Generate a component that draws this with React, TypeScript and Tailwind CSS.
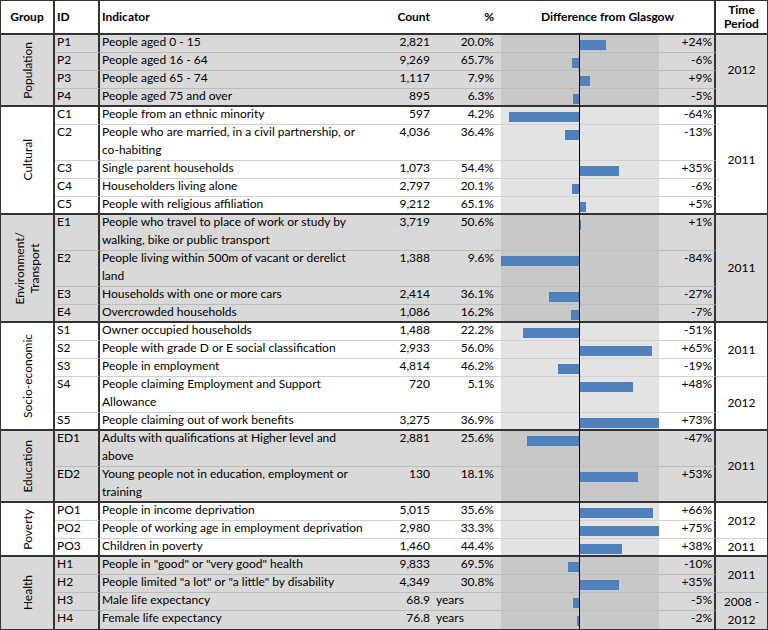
type Period = { label: string[]; at: number; span: number };
type Item = { id: string; text: string[]; count: string; pct: string; diff: number; unit?: boolean };
type Group = { name: string[]; shade: boolean; items: Item[]; periods: Period[] };

const groups: Group[] = [
  {
    name: ['Population'],
    shade: true,
    items: [
      { id: 'P1', text: ['People aged 0 - 15'], count: '2,821', pct: '20.0%', diff: 24 },
      { id: 'P2', text: ['People aged 16 - 64'], count: '9,269', pct: '65.7%', diff: -6 },
      { id: 'P3', text: ['People aged 65 - 74'], count: '1,117', pct: '7.9%', diff: 9 },
      { id: 'P4', text: ['People aged 75 and over'], count: '895', pct: '6.3%', diff: -5 },
    ],
    periods: [{ label: ['2012'], at: 0, span: 4 }],
  },
  {
    name: ['Cultural'],
    shade: false,
    items: [
      { id: 'C1', text: ['People from an ethnic minority'], count: '597', pct: '4.2%', diff: -64 },
      {
        id: 'C2',
        text: ['People who are married, in a civil partnership, or', 'co-habiting'],
        count: '4,036',
        pct: '36.4%',
        diff: -13,
      },
      { id: 'C3', text: ['Single parent households'], count: '1,073', pct: '54.4%', diff: 35 },
      { id: 'C4', text: ['Householders living alone'], count: '2,797', pct: '20.1%', diff: -6 },
      { id: 'C5', text: ['People with religious affiliation'], count: '9,212', pct: '65.1%', diff: 5 },
    ],
    periods: [{ label: ['2011'], at: 0, span: 6 }],
  },
  {
    name: ['Environment/', 'Transport'],
    shade: true,
    items: [
      {
        id: 'E1',
        text: ['People who travel to place of work or study by', 'walking, bike or public transport'],
        count: '3,719',
        pct: '50.6%',
        diff: 1,
      },
      {
        id: 'E2',
        text: ['People living within 500m of vacant or derelict', 'land'],
        count: '1,388',
        pct: '9.6%',
        diff: -84,
      },
      { id: 'E3', text: ['Households with one or more cars'], count: '2,414', pct: '36.1%', diff: -27 },
      { id: 'E4', text: ['Overcrowded households'], count: '1,086', pct: '16.2%', diff: -7 },
    ],
    periods: [{ label: ['2011'], at: 0, span: 6 }],
  },
  {
    name: ['Socio-economic'],
    shade: false,
    items: [
      { id: 'S1', text: ['Owner occupied households'], count: '1,488', pct: '22.2%', diff: -51 },
      { id: 'S2', text: ['People with grade D or E social classification'], count: '2,933', pct: '56.0%', diff: 65 },
      { id: 'S3', text: ['People in employment'], count: '4,814', pct: '46.2%', diff: -19 },
      {
        id: 'S4',
        text: ['People claiming Employment and Support', 'Allowance'],
        count: '720',
        pct: '5.1%',
        diff: 48,
      },
      { id: 'S5', text: ['People claiming out of work benefits'], count: '3,275', pct: '36.9%', diff: 73 },
    ],
    periods: [
      { label: ['2011'], at: 0, span: 3 },
      { label: ['2012'], at: 3, span: 3 },
    ],
  },
  {
    name: ['Education'],
    shade: true,
    items: [
      {
        id: 'ED1',
        text: ['Adults with qualifications at Higher level and', 'above'],
        count: '2,881',
        pct: '25.6%',
        diff: -47,
      },
      {
        id: 'ED2',
        text: ['Young people not in education, employment or', 'training'],
        count: '130',
        pct: '18.1%',
        diff: 53,
      },
    ],
    periods: [{ label: ['2011'], at: 0, span: 4 }],
  },
  {
    name: ['Poverty'],
    shade: false,
    items: [
      { id: 'PO1', text: ['People in income deprivation'], count: '5,015', pct: '35.6%', diff: 66 },
      { id: 'PO2', text: ['People of working age in employment deprivation'], count: '2,980', pct: '33.3%', diff: 75 },
      { id: 'PO3', text: ['Children in poverty'], count: '1,460', pct: '44.4%', diff: 38 },
    ],
    periods: [
      { label: ['2012'], at: 0, span: 2 },
      { label: ['2011'], at: 2, span: 1 },
    ],
  },
  {
    name: ['Health'],
    shade: true,
    items: [
      { id: 'H1', text: ['People in "good" or "very good" health'], count: '9,833', pct: '69.5%', diff: -10 },
      { id: 'H2', text: ['People limited "a lot" or "a little" by disability'], count: '4,349', pct: '30.8%', diff: 35 },
      { id: 'H3', text: ['Male life expectancy'], count: '68.9', pct: 'years', diff: -5, unit: true },
      { id: 'H4', text: ['Female life expectancy'], count: '76.8', pct: 'years', diff: -2, unit: true },
    ],
    periods: [
      { label: ['2011'], at: 0, span: 2 },
      { label: ['2008 -', '2012'], at: 2, span: 2 },
    ],
  },
];

const SPAN: Record<number, string> = {
  1: 'row-span-1',
  2: 'row-span-2',
  3: 'row-span-3',
  4: 'row-span-4',
  6: 'row-span-6',
};

const DARK = 'border-b-2 border-b-[#333]';

function Bar({ diff }: { diff: number }) {
  // 1.1px per percentage point, clipped to the band
  const w = Math.min(Math.round(Math.abs(diff) * 1.1), diff < 0 ? 78 : 79);
  const left = diff < 0 ? 78 - w : 79;
  return <div className="absolute top-[5px] h-[10px] bg-[#4f81bd]" style={{ left, width: w }} />;
}

function GroupRows({ g, last }: { g: Group; last: boolean }) {
  const rowBg = g.shade ? 'bg-[#d9d9d9]' : 'bg-white';
  const band = g.shade ? 'bg-[#c8c8c8]' : 'bg-[#e3e3e3]';
  const light = g.shade ? 'border-b border-b-[#bcbcbc]' : 'border-b border-b-[#d0d0d0]';
  const total = g.items.reduce((n, it) => n + it.text.length, 0);
  const groupEnd = last ? '' : DARK;

  return (
    <>
      <div className={`${SPAN[total]} ${rowBg} ${groupEnd} border-r-2 border-r-[#333] flex items-center justify-center`}>
        <div className="[writing-mode:vertical-rl] rotate-180 text-center leading-[15px]">
          {g.name.map((n) => (
            <div key={n}>{n}</div>
          ))}
        </div>
      </div>
      {g.items.map((it, i) => {
        const span = SPAN[it.text.length];
        const isEnd = i === g.items.length - 1;
        const bb = isEnd ? groupEnd : light;
        const period = g.periods.find((p) => p.at === i);
        let periodEnd = '';
        if (period) {
          const endIdx = g.items.findIndex(
            (_, k) => k >= i && g.items.slice(i, k + 1).reduce((n, x) => n + x.text.length, 0) >= period.span,
          );
          periodEnd = endIdx === g.items.length - 1 ? groupEnd : light;
        }
        return (
          <div key={it.id} className="contents">
            <div className={`${span} ${rowBg} ${bb} border-r-2 border-r-[#333] pl-[2px]`}>
              <div className="-mt-[2px]">{it.id}</div>
            </div>
            <div className={`${span} ${rowBg} ${bb} relative z-[1] pl-[2px] whitespace-nowrap`}>
              <div className="-mt-[2px]">
                {it.text.map((t) => (
                  <div key={t}>{t}</div>
                ))}
              </div>
            </div>
            <div className={`${span} ${rowBg} ${bb} pr-[3px] text-right`}>
              <div className="-mt-[2px]">{it.count}</div>
            </div>
            <div className={`${span} ${rowBg} ${bb} ${it.unit ? 'pl-[3px] text-left' : 'pr-[7px] text-right'}`}>
              <div className="-mt-[2px]">{it.pct}</div>
            </div>
            <div className={`${span} ${band} ${bb} relative`}>
              <Bar diff={it.diff} />
              <div className="absolute left-[78px] top-0 bottom-[-2px] w-px bg-black" />
            </div>
            <div className={`${span} ${rowBg} ${bb} border-r-2 border-r-[#333] pr-[2px] text-right`}>
              <div className="-mt-[2px]">
                {it.diff > 0 ? '+' : ''}
                {it.diff}%
              </div>
            </div>
            {period && (
              <div className={`${SPAN[period.span]} ${rowBg} ${periodEnd} flex flex-col items-center justify-center leading-[18px]`}>
                {period.label.map((l) => (
                  <div key={l}>{l}</div>
                ))}
              </div>
            )}
          </div>
        );
      })}
    </>
  );
}

export default function App() {
  return (
    <div className="w-[768px] h-[630px] bg-white font-[Lato,sans-serif] text-[12px] leading-[18px] text-black">
      <div className="grid grid-cols-[54px_45px_260px_73px_68px_158px_57px_51px] grid-rows-[34px_repeat(33,18px)] border border-[#333]">
        {/* header */}
        <div className={`${DARK} border-r-2 border-r-[#333] flex items-center justify-center font-bold`}>Group</div>
        <div className={`${DARK} border-r-2 border-r-[#333] flex items-center pl-[2px] font-bold`}>ID</div>
        <div className={`${DARK} flex items-center pl-[2px] font-bold`}>Indicator</div>
        <div className={`${DARK} flex items-center justify-end pr-[3px] font-bold`}>Count</div>
        <div className={`${DARK} flex items-center justify-end pr-[7px] font-bold`}>%</div>
        <div className={`${DARK} col-span-2 border-r-2 border-r-[#333] flex items-center justify-center font-bold`}>
          Difference from Glasgow
        </div>
        <div className={`${DARK} flex flex-col items-center justify-center font-bold leading-[14px]`}>
          <div>Time</div>
          <div>Period</div>
        </div>

        {groups.map((g, i) => (
          <GroupRows key={g.name[0]} g={g} last={i === groups.length - 1} />
        ))}
      </div>
    </div>
  );
}
